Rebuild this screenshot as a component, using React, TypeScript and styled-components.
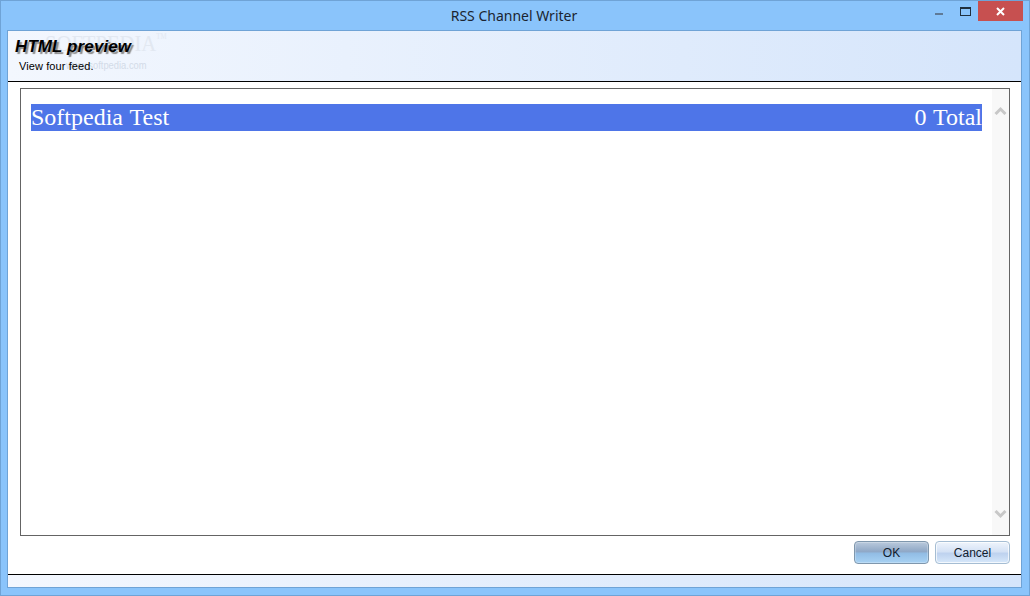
import styled, { createGlobalStyle } from "styled-components";

const GlobalStyle = createGlobalStyle`
  html, body {
    margin: 0;
    padding: 0;
    overflow: hidden;
  }
`;

const Window = styled.div`
  width: 1030px;
  height: 596px;
  box-sizing: border-box;
  display: flex;
  flex-direction: column;
  background: #8ac4fb;
  border: 1px solid #6fa3d6;
  font-family: "Liberation Sans", Arial, sans-serif;
`;

const TitleBar = styled.div`
  height: 29px;
  flex: none;
  position: relative;
  display: flex;
  justify-content: center;
  align-items: center;
  padding: 0 2px 1px 0;
  box-sizing: border-box;
`;

const Title = styled.span`
  font-family: "Noto Sans", sans-serif;
  font-size: 14px;
  color: #1b2430;
`;

const WindowButtons = styled.div`
  position: absolute;
  top: 0;
  right: 6px;
  display: flex;
  align-items: flex-start;
`;

const IconButton = styled.div`
  width: 26px;
  height: 20px;
  display: flex;
  align-items: center;
  justify-content: center;
`;

const CloseButton = styled.div`
  width: 45px;
  height: 20px;
  background: #c75050;
  display: flex;
  align-items: center;
  justify-content: center;
`;

const Client = styled.div`
  flex: 1;
  margin: 0 7px 7px 6px;
  display: flex;
  flex-direction: column;
  background: #fff;
  border: 1px solid #6fa3d6;
  min-height: 0;
`;

const Header = styled.div`
  height: 51px;
  flex: none;
  box-sizing: border-box;
  position: relative;
  padding: 6px 0 0 7px;
  background: linear-gradient(90deg, #f3f7fe 0%, #d5e5fb 100%);
  border-bottom: 1px solid #000;
`;

const Watermark = styled.div`
  position: absolute;
  top: 0;
  left: 37px;
  font-family: "Liberation Serif", serif;
  font-size: 24px;
  line-height: 24px;
  color: #e2e8f1;
  white-space: nowrap;
  transform: scaleX(0.86);
  transform-origin: left top;

  sup {
    font-size: 8px;
    line-height: 0;
    vertical-align: 12px;
  }
`;

const WatermarkUrl = styled.div`
  position: absolute;
  top: 27px;
  left: 58px;
  font-size: 11px;
  line-height: 14px;
  color: #d3dbe8;
  transform: scaleX(0.85);
  transform-origin: left top;
`;

const HeaderTitle = styled.div`
  position: relative;
  font-size: 17px;
  font-weight: bold;
  font-style: italic;
  line-height: 19px;
  letter-spacing: 0.1px;
  color: #000;
  text-shadow: 2px 2px 1px #8a8a8a;
`;

const HeaderSub = styled.div`
  position: relative;
  margin: 3px 0 0 4px;
  font-size: 11px;
  line-height: 14px;
  letter-spacing: 0.1px;
  color: #000;
`;

const Body = styled.div`
  flex: 1;
  min-height: 0;
  box-sizing: border-box;
  padding: 6px 11px 10px 12px;
  display: flex;
  flex-direction: column;
  gap: 5px;
`;

const Preview = styled.div`
  flex: 1;
  min-height: 0;
  display: flex;
  border: 1px solid #646464;
`;

const PreviewContent = styled.div`
  flex: 1;
  padding: 15px 10px;
`;

const FeedBar = styled.div`
  height: 27px;
  display: flex;
  justify-content: space-between;
  align-items: center;
  background: #4e75e8;
  color: #fff;
  font-family: "Liberation Serif", serif;
  font-size: 24px;
  word-spacing: 1px;
  white-space: nowrap;
`;

const ScrollBar = styled.div`
  width: 17px;
  flex: none;
  background: #f8f8f8;
  display: flex;
  flex-direction: column;
  justify-content: space-between;
  align-items: center;
  padding: 17px 0 16px;
  box-sizing: border-box;
`;

const Actions = styled.div`
  display: flex;
  justify-content: flex-end;
  gap: 6px;
`;

const ActionButton = styled.button<{ $active?: boolean }>`
  width: 75px;
  height: 23px;
  padding: 0;
  box-sizing: border-box;
  border-radius: 4px;
  border: 1px solid ${(p) => (p.$active ? "#7f97ad" : "#a5bdd3")};
  font-family: "Liberation Sans", Arial, sans-serif;
  font-size: 12px;
  color: #10202e;
  box-shadow: inset 0 0 0 1px rgba(255, 255, 255, ${(p) => (p.$active ? 0.25 : 0.7)});
  background: ${(p) =>
    p.$active
      ? "linear-gradient(180deg, #b9c9dc 0%, #90a8c6 45%, #92bde5 55%, #a8d2f3 100%)"
      : "linear-gradient(180deg, #eef4fc 0%, #d5e2f5 45%, #bed2ef 55%, #d7e8fa 100%)"};
`;

const Footer = styled.div`
  height: 13px;
  flex: none;
  box-sizing: border-box;
  background: linear-gradient(90deg, #f3f7fe 0%, #d5e5fb 100%);
  border-top: 1px solid #000;
`;

const Chevron = ({ up }: { up?: boolean }) => (
  <svg width="13" height="9" viewBox="0 0 13 9">
    <path
      d={up ? "M1.5 8 L6.5 3 L11.5 8" : "M1.5 1 L6.5 6 L11.5 1"}
      fill="none"
      stroke="#c8c8c8"
      strokeWidth="3"
    />
  </svg>
);

export default function App() {
  return (
    <>
      <GlobalStyle />
      <Window>
        <TitleBar>
          <Title>RSS Channel Writer</Title>
          <WindowButtons>
            <IconButton>
              <svg width="10" height="12" viewBox="0 0 10 12">
                <rect x="1" y="8" width="8" height="2" fill="#5f7a97" />
              </svg>
            </IconButton>
            <IconButton>
              <svg width="11" height="9" viewBox="0 0 11 9">
                <rect x="0.5" y="0.5" width="10" height="8" fill="none" stroke="#20303f" />
                <rect x="0" y="0" width="11" height="2" fill="#20303f" />
              </svg>
            </IconButton>
            <CloseButton>
              <svg width="9" height="9" viewBox="0 0 9 9">
                <path d="M1 1 L8 8 M8 1 L1 8" stroke="#fff" strokeWidth="2" />
              </svg>
            </CloseButton>
          </WindowButtons>
        </TitleBar>
        <Client>
          <Header>
            <Watermark>
              SOFTPEDIA<sup>TM</sup>
            </Watermark>
            <WatermarkUrl>www.softpedia.com</WatermarkUrl>
            <HeaderTitle>HTML preview</HeaderTitle>
            <HeaderSub>View four feed.</HeaderSub>
          </Header>
          <Body>
            <Preview>
              <PreviewContent>
                <FeedBar>
                  <span>Softpedia Test</span>
                  <span>0 Total</span>
                </FeedBar>
              </PreviewContent>
              <ScrollBar>
                <Chevron up />
                <Chevron />
              </ScrollBar>
            </Preview>
            <Actions>
              <ActionButton $active>OK</ActionButton>
              <ActionButton>Cancel</ActionButton>
            </Actions>
          </Body>
          <Footer />
        </Client>
      </Window>
    </>
  );
}
